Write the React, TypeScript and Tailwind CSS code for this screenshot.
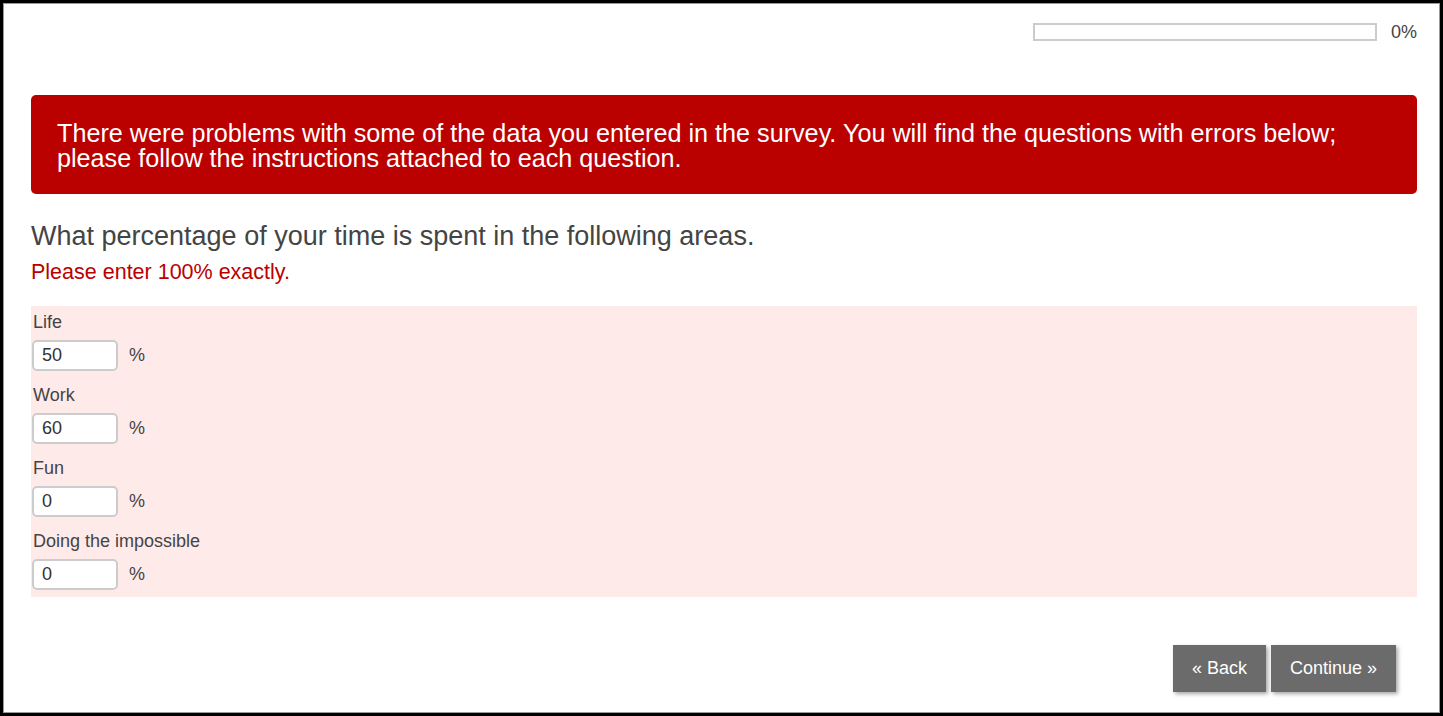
import React from "react";

const items = [
  { label: "Life", value: "50" },
  { label: "Work", value: "60" },
  { label: "Fun", value: "0" },
  { label: "Doing the impossible", value: "0" },
];

export default function App() {
  return (
    <div
      className="w-[1443px] h-[716px] bg-white border-[3px] border-black shadow-[inset_1px_1px_0_#9a9a9a,inset_-1px_-1px_0_#9a9a9a] overflow-hidden text-[#444]"
      style={{ fontFamily: '"Liberation Sans", Arial, sans-serif' }}
    >
      <div className="pl-[28px] pr-[23px]">
        {/* progress */}
        <div className="flex items-center justify-end pt-[20px] h-[38px]">
          <div className="w-[344px] h-[18px] border-2 border-[#cccccc] bg-white" />
          <span className="ml-[14px] text-[18px] leading-[18px] text-[#444]">0%</span>
        </div>

        {/* error banner */}
        <div className="mt-[54px] w-[1386px] h-[99px] rounded-[5px] bg-[#bb0000] text-white text-[25.2px] leading-[25px] pl-[26px] pr-[26px] pt-[26px]">
          There were problems with some of the data you entered in the survey. You will find the questions with errors below; please follow the instructions attached to each question.
        </div>

        <h2 className="mt-[26px] text-[27px] leading-[32px] text-[#444]">
          What percentage of your time is spent in the following areas.
        </h2>
        <p className="mt-[8px] text-[21.5px] leading-[24px] text-[#bb0000]">
          Please enter 100% exactly.
        </p>

        <div className="mt-[22px] w-[1386px] bg-[#ffeaea] pt-[6px] pb-[7px]">
          {items.map((it, i) => (
            <div key={it.label} className={i < items.length - 1 ? "mb-[14px]" : ""}>
              <div className="pl-[2px] text-[18px] leading-[20px] text-[#444]">{it.label}</div>
              <div className="flex items-center mt-[8px]">
                <div className="ml-[1px] w-[86px] h-[31px] border-2 border-[#cccccc] rounded-[5px] bg-white pl-[8px] flex items-center text-[18px] text-[#333]">
                  {it.value}
                </div>
                <span className="ml-[11px] text-[18px] text-[#444]">%</span>
              </div>
            </div>
          ))}
        </div>

        <div className="flex justify-end gap-[5px] mt-[48px] pr-[21px]">
          <button className="h-[47px] px-[19px] bg-[#6b6b6b] text-white text-[18px] shadow-[2px_2px_4px_rgba(0,0,0,0.35)]">
            « Back
          </button>
          <button className="h-[47px] px-[19px] bg-[#6b6b6b] text-white text-[18px] shadow-[2px_2px_4px_rgba(0,0,0,0.35)]">
            Continue »
          </button>
        </div>
      </div>
    </div>
  );
}
